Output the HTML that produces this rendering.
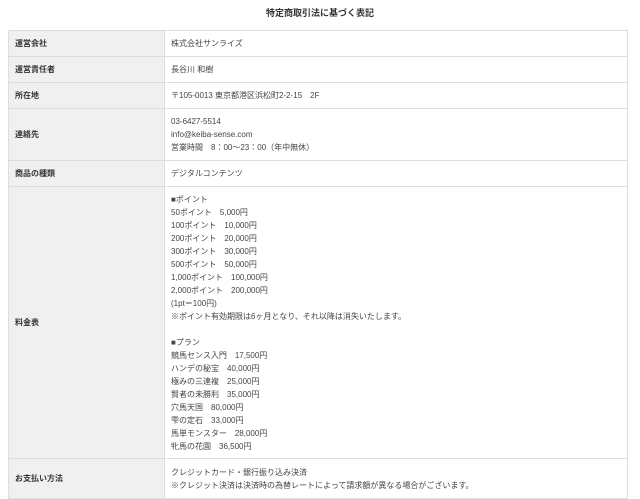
<!DOCTYPE html>
<html><head><meta charset="utf-8"><style>
body{margin:0;background:#fff;font-family:"Liberation Sans","Noto Sans CJK JP",sans-serif;color:#444;}
h1{position:absolute;top:6px;left:0;width:640px;text-align:center;font-size:9px;font-weight:bold;color:#333;margin:0;line-height:14px}
table{position:absolute;top:30px;left:8px;width:620px;border-collapse:collapse;font-size:8px;line-height:13px}
td{border:1px solid #ddd;padding:0 6px;vertical-align:middle}
td.l{width:143px;background:#f0f0f0;font-weight:bold;color:#333;padding-left:6px}
td.v{background:#fff}
</style></head><body>
<h1>特定商取引法に基づく表記</h1>
<table>
<tr style="height:26px"><td class="l">運営会社</td><td class="v">株式会社サンライズ</td></tr>
<tr style="height:26px"><td class="l">運営責任者</td><td class="v">長谷川 和樹</td></tr>
<tr style="height:26px"><td class="l">所在地</td><td class="v">〒105-0013 東京都港区浜松町2-2-15　2F</td></tr>
<tr style="height:52px"><td class="l">連絡先</td><td class="v">03-6427-5514<br>info@keiba-sense.com<br>営業時間　8：00〜23：00（年中無休）</td></tr>
<tr style="height:26px"><td class="l">商品の種類</td><td class="v">デジタルコンテンツ</td></tr>
<tr style="height:272px"><td class="l">料金表</td><td class="v">■ポイント<br>50ポイント　5,000円<br>100ポイント　10,000円<br>200ポイント　20,000円<br>300ポイント　30,000円<br>500ポイント　50,000円<br>1,000ポイント　100,000円<br>2,000ポイント　200,000円<br>(1pt＝100円)<br>※ポイント有効期限は6ヶ月となり、それ以降は消失いたします。<br><br>■プラン<br>競馬センス入門　17,500円<br>ハンデの秘宝　40,000円<br>極みの三連複　25,000円<br>賢者の未勝利　35,000円<br>穴馬天国　80,000円<br>雫の定石　33,000円<br>馬単モンスター　28,000円<br>牝馬の花園　36,500円</td></tr>
<tr style="height:40px"><td class="l">お支払い方法</td><td class="v">クレジットカード・銀行振り込み決済<br>※クレジット決済は決済時の為替レートによって請求額が異なる場合がございます。</td></tr>
</table>
</body></html>
